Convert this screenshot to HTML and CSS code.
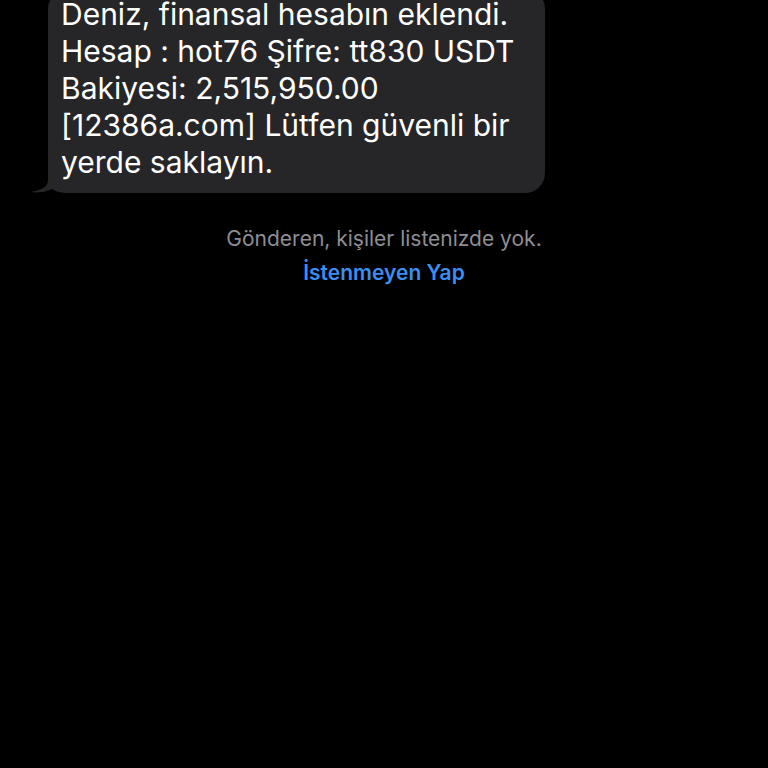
FILE: index.html
```html
<!DOCTYPE html>
<html lang="tr">
<head>
<meta charset="utf-8">
<link rel="stylesheet" href="styles.css">
</head>
<body>
<main class="thread">
  <div class="row">
    <div class="bubble">
      <svg class="tail" width="40" height="30" viewBox="0 0 40 30"><path d="M20,0 L20,17 C20,23 15,27 2,29 C9,30 17,29.5 24,26 C29,29 34,30 40,30 L40,0 Z" fill="#262628"/></svg>
      <p class="msg">Deniz, finansal hesabın eklendi. Hesap : hot76 Şifre: tt830 USDT Bakiyesi: 2,515,950.00 [12386a.com] Lütfen güvenli bir yerde saklayın.</p>
    </div>
  </div>
  <div class="notice">
    <p class="sender">Gönderen, kişiler listenizde yok.</p>
    <p class="spam">İstenmeyen Yap</p>
  </div>
</main>
</body>
</html>
```
FILE: styles.css
```css
html, body {
  margin: 0;
  padding: 0;
  background: #000;
  height: 100%;
}
.thread {
  font-family: Inter, "Noto Sans", sans-serif;
  display: flex;
  flex-direction: column;
}
.row {
  display: flex;
  padding-left: 48px;
  margin-top: -11px;
}
.bubble {
  position: relative;
  background: #262628;
  border-radius: 20px;
  width: 497px;
  box-sizing: border-box;
  padding: 7px 13px 12px 13px;
}
.msg {
  position: relative;
  margin: 0;
  color: #fff;
  font-size: 30px;
  line-height: 37px;
}
.tail {
  position: absolute;
  left: -20px;
  bottom: 0;
}
.notice {
  display: flex;
  flex-direction: column;
  align-items: center;
  margin-top: 33px;
}
.sender {
  margin: 0;
  color: #8e8e93;
  font-size: 21px;
  line-height: 26px;
}
.spam {
  margin: 8px 0 0;
  color: #3d8ef2;
  font-size: 21px;
  font-weight: 600;
  line-height: 26px;
}
```
